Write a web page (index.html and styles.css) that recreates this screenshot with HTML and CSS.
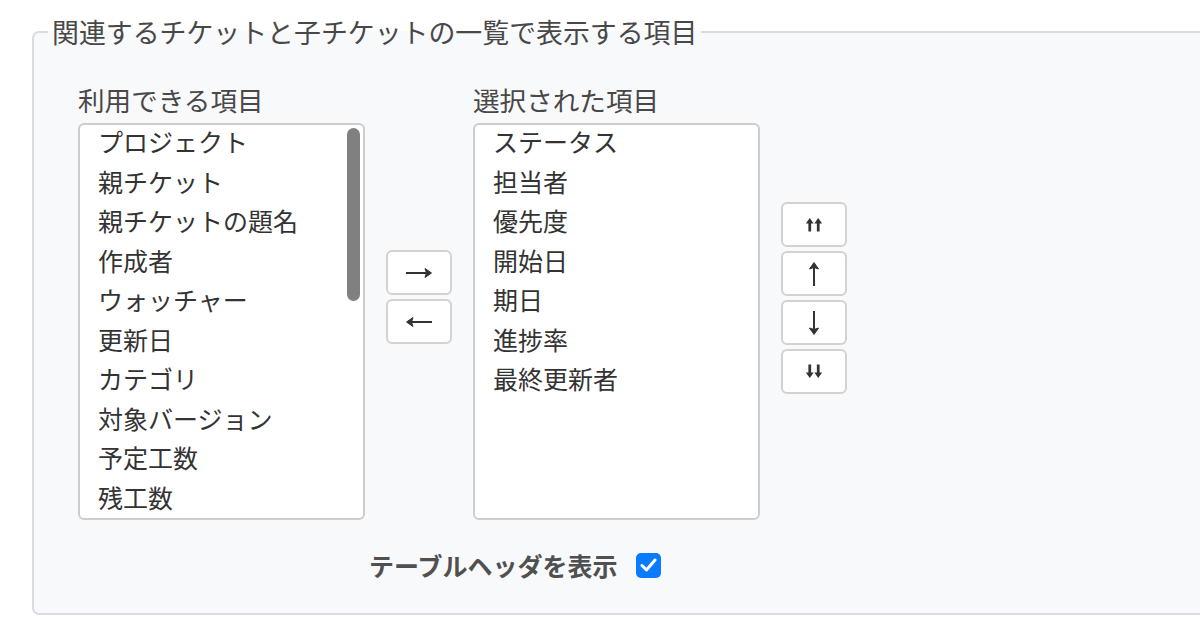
FILE: index.html
```html
<!DOCTYPE html>
<html lang="ja">
<head>
<meta charset="utf-8">
<link rel="stylesheet" href="styles.css">
</head>
<body>
<fieldset class="box">
  <legend class="box-title">関連するチケットと子チケットの一覧で表示する項目</legend>
  <div class="columns">
    <div class="col">
      <div class="col-label">利用できる項目</div>
      <div class="list">
        <div class="opts">
          <div class="opt">プロジェクト</div>
          <div class="opt">親チケット</div>
          <div class="opt">親チケットの題名</div>
          <div class="opt">作成者</div>
          <div class="opt">ウォッチャー</div>
          <div class="opt">更新日</div>
          <div class="opt">カテゴリ</div>
          <div class="opt">対象バージョン</div>
          <div class="opt">予定工数</div>
          <div class="opt">残工数</div>
        </div>
        <div class="thumb"></div>
      </div>
    </div>
    <div class="btns">
      <button class="btn"><svg width="28" height="14" viewBox="0 0 28 14"><path d="M1 7H25" stroke="#333" stroke-width="2"/><path d="M20 2.5L26.5 7L20 11.5L21.5 7Z" fill="#333" stroke="#333" stroke-width="1" stroke-linejoin="round"/></svg></button>
      <button class="btn"><svg width="28" height="14" viewBox="0 0 28 14"><path d="M3 7H27" stroke="#333" stroke-width="2"/><path d="M8 2.5L1.5 7L8 11.5L6.5 7Z" fill="#333" stroke="#333" stroke-width="1" stroke-linejoin="round"/></svg></button>
    </div>
    <div class="col">
      <div class="col-label">選択された項目</div>
      <div class="list">
        <div class="opts">
          <div class="opt">ステータス</div>
          <div class="opt">担当者</div>
          <div class="opt">優先度</div>
          <div class="opt">開始日</div>
          <div class="opt">期日</div>
          <div class="opt">進捗率</div>
          <div class="opt">最終更新者</div>
        </div>
      </div>
    </div>
    <div class="btns btns-order">
      <button class="btn"><svg width="18" height="15" viewBox="0 0 17 14"><path d="M4.5 4V13.5M12.5 4V13.5" stroke="#333" stroke-width="2.6"/><path d="M0.8 6L4.5 0.8L8.2 6ZM8.8 6L12.5 0.8L16.2 6Z" fill="#333"/></svg></button>
      <button class="btn"><svg width="14" height="26" viewBox="0 0 14 26"><path d="M7 3V25" stroke="#333" stroke-width="2"/><path d="M2.5 8L7 1.5L11.5 8L7 6.5Z" fill="#333" stroke="#333" stroke-width="1" stroke-linejoin="round"/></svg></button>
      <button class="btn"><svg width="14" height="26" viewBox="0 0 14 26"><path d="M7 1V23" stroke="#333" stroke-width="2"/><path d="M2.5 18L7 24.5L11.5 18L7 19.5Z" fill="#333" stroke="#333" stroke-width="1" stroke-linejoin="round"/></svg></button>
      <button class="btn"><svg width="18" height="15" viewBox="0 0 17 14"><path d="M4.5 0.5V10M12.5 0.5V10" stroke="#333" stroke-width="2.6"/><path d="M0.8 8L4.5 13.2L8.2 8ZM8.8 8L12.5 13.2L16.2 8Z" fill="#333"/></svg></button>
    </div>
  </div>
  <div class="header-row">
    <span class="header-label">テーブルヘッダを表示</span>
    <span class="check"><svg width="17" height="14" viewBox="0 0 17 14"><path d="M2 7.5L6.5 12L15 2" fill="none" stroke="#fff" stroke-width="3" stroke-linecap="round" stroke-linejoin="round"/></svg></span>
  </div>
</fieldset>
</body>
</html>
```

FILE: styles.css
```css
html, body {
  margin: 0;
  padding: 0;
  background: #ffffff;
  overflow: hidden;
}
body {
  padding-top: 16px;
  font-family: "Noto Sans CJK JP", "Noto Sans", sans-serif;
  color: #333333;
  width: 1200px;
  height: 630px;
  box-sizing: border-box;
}
.box {
  margin: 0 0 0 32px;
  width: 1300px;
  box-sizing: border-box;
  border: 2px solid #d8dde4;
  border-radius: 7px;
  background: #f8f9fb;
  padding: 37px 0 33px 44px;
  min-width: 0;
}
.box-title {
  margin-left: -30px;
  padding: 0 4px;
  font-size: 26.9px;
  line-height: 32px;
  color: #484848;
}
.columns {
  display: flex;
  align-items: flex-start;
  gap: 21px;
}
.col {
  display: flex;
  flex-direction: column;
}
.col-label {
  font-size: 26.6px;
  line-height: 30px;
  color: #484848;
  margin-bottom: 8px;
}
.list {
  position: relative;
  width: 287px;
  height: 397px;
  box-sizing: border-box;
  border: 2px solid #cdcdcd;
  border-radius: 6px;
  background: #ffffff;
  overflow: hidden;
}
.opts {
  margin-top: -3px;
}
.opt {
  font-size: 25px;
  line-height: 39.5px;
  padding-left: 18px;
  color: #333333;
  white-space: nowrap;
}
.thumb {
  position: absolute;
  right: 3px;
  top: 3px;
  width: 13px;
  height: 173px;
  border-radius: 7px;
  background: #808080;
}
.btns {
  display: flex;
  flex-direction: column;
  gap: 4px;
  margin-top: 165px;
}
.btns-order {
  margin-top: 117px;
}
.btn {
  width: 66px;
  height: 45px;
  box-sizing: border-box;
  border: 2px solid #d2d2d2;
  border-radius: 6px;
  background: #ffffff;
  padding: 0;
  display: flex;
  align-items: center;
  justify-content: center;
}
.btn svg {
  display: block;
}
.header-row {
  display: flex;
  align-items: center;
  margin-top: 30px;
  margin-left: 291px;
  height: 30px;
}
.header-label {
  font-size: 25px;
  line-height: 30px;
  font-weight: bold;
  color: #505050;
}
.check {
  margin-left: 18px;
  width: 25px;
  height: 25px;
  border-radius: 5px;
  background: #0a7bff;
  display: flex;
  align-items: center;
  justify-content: center;
}
```
